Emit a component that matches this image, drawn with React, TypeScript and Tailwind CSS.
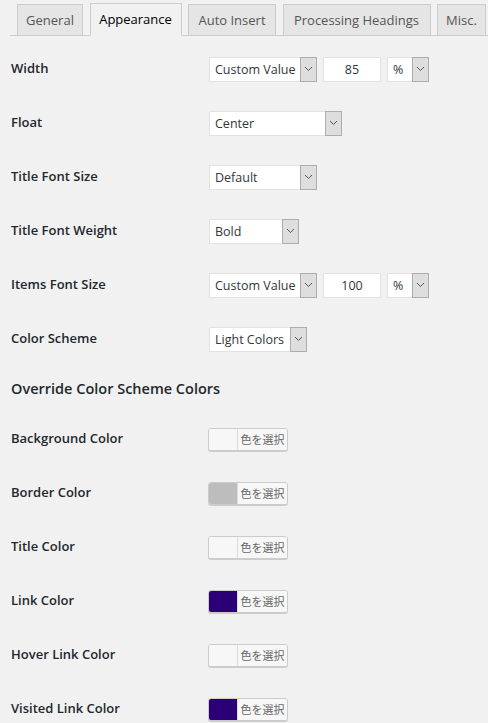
import React from 'react';

const tabs = [
  { label: 'General', w: 'w-[66px]' },
  { label: 'Appearance', w: 'w-[92px]' },
  { label: 'Auto Insert', w: 'w-[88px]' },
  { label: 'Processing Headings', w: 'w-[148px]' },
  { label: 'Misc.', w: 'w-[49px]' },
];

function Chevron() {
  return (
    <svg width="9" height="6" viewBox="0 0 9 6" fill="none">
      <path d="M1 1l3.5 3.5L8 1" stroke="#555" strokeWidth="1" />
    </svg>
  );
}

function Select({ value, width }: { value: string; width: string }) {
  return (
    <div className={`flex h-[25px] items-stretch bg-white border border-[#e2e2e2] ${width}`}>
      <span className="flex-1 pl-[5px] text-[12.5px] leading-[23px] text-[#32373c] whitespace-nowrap overflow-hidden">
        {value}
      </span>
      <span className="w-[17px] flex items-center justify-center bg-[#dedede] border border-[#adadad] -m-px">
        <Chevron />
      </span>
    </div>
  );
}

function NumberInput({ value }: { value: string }) {
  return (
    <div className="w-[58px] h-[25px] bg-white border border-[#e2e2e2] text-center text-[12.5px] leading-[23px] text-[#32373c]">
      {value}
    </div>
  );
}

function ColorPicker({ color }: { color: string }) {
  return (
    <div className="flex h-[23px] w-[80px] rounded-[3px] border border-[#cccccc] bg-[#f7f7f7] shadow-[0_1px_0_#cccccc] overflow-hidden">
      <span className="w-[28px] h-full" style={{ backgroundColor: color }} />
      <span className="flex-1 border-l border-[#dddddd] bg-[#f7f7f7] text-[11px] leading-[21px] text-[#666] text-center font-['Noto_Sans_CJK_JP',sans-serif]">
        色を選択
      </span>
    </div>
  );
}

function Row({ label, children }: { label: string; children: React.ReactNode }) {
  return (
    <div className="flex h-[54px] items-center">
      <div className="w-[209px] pl-[11px] text-[13px] font-semibold text-[#23282d]">{label}</div>
      <div className="flex items-center gap-[6px]">{children}</div>
    </div>
  );
}

export default function App() {
  return (
    <div className="min-h-screen bg-[#f1f1f1] font-['Open_Sans','Noto_Sans',sans-serif] overflow-hidden">
      {/* Tabs */}
      <div className="ml-[10px] pt-[4px] pl-[7px] flex items-end gap-[6.5px] border-b border-[#cccccc] h-[36px]">
        {tabs.map((t) => {
          const active = t.label === 'Appearance';
          return (
            <div
              key={t.label}
              className={
                active
                  ? `${t.w} h-[33px] -mb-px text-center border border-[#cccccc] border-b-[#f1f1f1] bg-[#f1f1f1] text-[13px] font-medium leading-[31px] text-black whitespace-nowrap`
                  : `${t.w} h-[32px] -mb-px text-center border border-[#cccccc] bg-[#e5e5e5] text-[13px] font-medium leading-[30px] text-[#555555] whitespace-nowrap`
              }
            >
              {t.label}
            </div>
          );
        })}
      </div>

      <div className="pt-[6px]">
        <Row label="Width">
          <Select value="Custom Value" width="w-[108px]" />
          <NumberInput value="85" />
          <Select value="%" width="w-[42px]" />
        </Row>
        <Row label="Float">
          <Select value="Center" width="w-[133px]" />
        </Row>
        <Row label="Title Font Size">
          <Select value="Default" width="w-[108px]" />
        </Row>
        <Row label="Title Font Weight">
          <Select value="Bold" width="w-[90px]" />
        </Row>
        <Row label="Items Font Size">
          <Select value="Custom Value" width="w-[108px]" />
          <NumberInput value="100" />
          <Select value="%" width="w-[42px]" />
        </Row>
        <Row label="Color Scheme">
          <Select value="Light Colors" width="w-[98px]" />
        </Row>

        <div className="h-[46px] flex items-center pl-[11px] text-[14.5px] font-semibold text-[#23282d]">
          Override Color Scheme Colors
        </div>

        <Row label="Background Color">
          <div className="-ml-px"><ColorPicker color="#f7f7f7" /></div>
        </Row>
        <Row label="Border Color">
          <div className="-ml-px"><ColorPicker color="#bdbdbd" /></div>
        </Row>
        <Row label="Title Color">
          <div className="-ml-px"><ColorPicker color="#f7f7f7" /></div>
        </Row>
        <Row label="Link Color">
          <div className="-ml-px"><ColorPicker color="#2b0077" /></div>
        </Row>
        <Row label="Hover Link Color">
          <div className="-ml-px"><ColorPicker color="#f7f7f7" /></div>
        </Row>
        <Row label="Visited Link Color">
          <div className="-ml-px"><ColorPicker color="#2b0077" /></div>
        </Row>
      </div>
    </div>
  );
}
